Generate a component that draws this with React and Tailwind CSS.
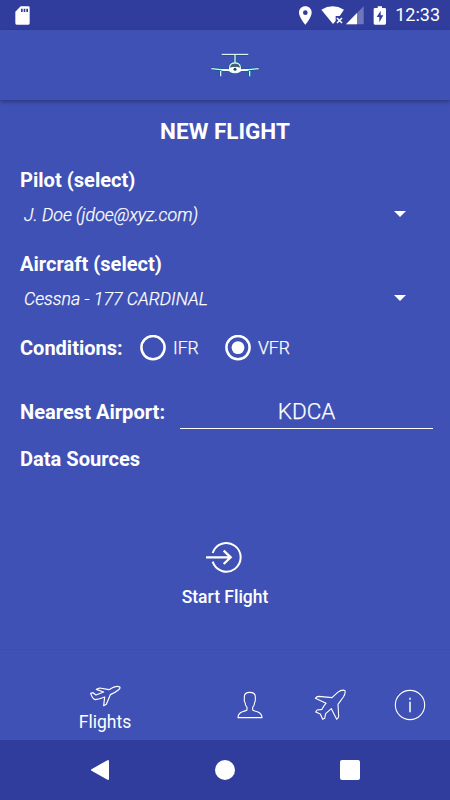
import { useState } from 'react'

const conditions = ['IFR', 'VFR']

function StatusBar() {
  return (
    <div className="flex h-[30px] items-center bg-[#303d9c] pl-[15px] pr-[10px]">
      <svg className="h-[19px] w-[15px]" viewBox="0 0 45 57">
        <path
          fill="white"
          fillRule="evenodd"
          d="M17 1H40Q44 1 44 5V52Q44 56 40 56H5Q1 56 1 52V17ZM18 8V18H23V8ZM26 8V18H31V8ZM34 8V18H39V8Z"
        />
      </svg>
      <div className="ml-auto flex items-center">
        {/* location */}
        <svg className="h-[19px] w-[13px]" viewBox="29 17 39 57">
          <path
            fill="white"
            fillRule="evenodd"
            d="M48 18C37 18 29 26 29 37C29 51 48 73 48 73C48 73 67 51 67 37C67 26 59 18 48 18ZM48 30A7 7 0 1 1 48 44A7 7 0 1 1 48 30Z"
          />
        </svg>
        {/* wifi without connection */}
        <svg className="ml-[9px] h-[19px] w-[23px]" viewBox="94 17 69 57">
          <path fill="white" d="M95 28Q129 8 163 28L150 47H138V62L130 71Z" />
          <path stroke="white" strokeWidth="4.5" d="M142 53L157 68M157 53L142 68" />
        </svg>
        {/* mobile signal */}
        <svg className="ml-[2px] h-[19px] w-[18px]" viewBox="169 17 54 57">
          <path fill="white" fillOpacity=".3" d="M222 18V72H169Z" />
          <path fill="white" d="M202 38V72H169Z" />
        </svg>
        {/* battery */}
        <svg className="ml-[9px] h-[19px] w-[14px]" viewBox="250 17 42 57">
          <path
            fill="white"
            fillRule="evenodd"
            d="M264 18H277V23H285Q289 23 289 27V69Q289 73 285 73H256Q252 73 252 69V27Q252 23 256 23H264ZM273 31L261 50H269V66L281 45H273Z"
          />
        </svg>
        <span className="ml-[8px] text-[18px] leading-[30px]">12:33</span>
      </div>
    </div>
  )
}

function HeaderPlane() {
  const shape = (
    <>
      <path d="M65 28H145M105 28V54M34 71L92 77M176 71L118 77M62 78V94M149 78V94" />
      <path d="M89 66Q91 54 105 54Q119 54 121 66V76Q117 83 105 83Q93 83 89 76Z" />
    </>
  )
  return (
    <svg className="h-[27px] w-[50px]" viewBox="30 18 150 81" fill="none">
      <g stroke="#075d91" strokeWidth="8">{shape}</g>
      <g stroke="#d8f5f1" strokeWidth="4">{shape}</g>
      <path fill="white" d="M60 72L92 73V79L66 77ZM150 72L118 73V79L144 77Z" />
      <path fill="#4a5f70" d="M91 65Q93 56 105 56Q117 56 119 65L112 67H98Z" />
      <path fill="white" d="M89 68L98 66H112L121 68V76Q117 83 105 83Q93 83 89 76Z" />
      <circle cx="105" cy="73" r="4.5" fill="#174477" />
    </svg>
  )
}

function Select({ label, value }) {
  return (
    <div className="mb-4">
      <div className="h-8 text-[20.1px] font-bold leading-8">{label}</div>
      <button type="button" className="flex h-9 w-full items-center justify-between pl-1 pr-[27px]">
        <span className="mt-0.5 text-[17.8px] font-light italic [-webkit-text-stroke:0.25px_white]">{value}</span>
        <svg className="h-[6px] w-[12px]" viewBox="0 0 12 6">
          <path fill="white" d="M0 0H12L6 6Z" />
        </svg>
      </button>
    </div>
  )
}

function BottomTabs() {
  return (
    <nav className="flex h-[91px] border-t border-[#3c4dac]">
      <button type="button" className="flex w-[210px] flex-col items-center pt-[35px]">
        <svg className="ml-[2px] h-[22px] w-[32px]" viewBox="90 45 96 66" fill="none" stroke="white" strokeWidth="3.6" strokeLinejoin="round">
          <path d="M92 70L99 68L108 75L131 66L109 58L119 54L147 59L160 52Q173 47 179 51Q182 54 175 60Q168 66 151 74L139 103L131 107L134 81Q119 88 106 89Q97 86 92 70Z" />
        </svg>
        <span className="mt-[4px] text-[17.5px] leading-[22px]">Flights</span>
      </button>
      <button type="button" className="flex w-20 justify-center pt-10">
        <svg className="h-[30px] w-[26px]" viewBox="53 45 78 90" fill="none" stroke="white" strokeWidth="3.3" strokeLinejoin="round">
          <path d="M83 105V97Q77 90 77 82Q74 80 75 74V65Q75 52 91 52Q108 52 108 65V74Q108 80 106 82Q106 90 100 97V105Q104 108 114 110Q128 115 128 128H56Q56 115 69 110Q79 108 83 105Z" />
        </svg>
      </button>
      <button type="button" className="flex w-20 justify-center pt-[39px]">
        <svg className="h-8 w-8" viewBox="282 42 96 96" fill="none" stroke="white" strokeWidth="3.3" strokeLinejoin="round">
          <path d="M336 68L296 64Q290 64 286 70L318 85Q311 92 306 103L291 105L287 111L301 117L308 133L314 130L317 116L334 101L350 133Q356 129 356 124L354 88L370 66Q377 55 375 47Q367 42 353 52Z" />
        </svg>
      </button>
      <button type="button" className="flex w-20 justify-center pt-[39px]">
        <svg className="h-8 w-8" viewBox="522 42 96 96" fill="none" stroke="white">
          <circle cx="570" cy="90" r="44" strokeWidth="3.3" />
          <path strokeWidth="4.5" d="M570 80V112M570 68V74" />
        </svg>
      </button>
    </nav>
  )
}

function App() {
  const [selected, setSelected] = useState('VFR')
  const [airport, setAirport] = useState('KDCA')

  return (
    <div className="flex h-[800px] w-[450px] flex-col bg-[#3f51b5] font-['Roboto',sans-serif] text-white">
      <StatusBar />
      <header className="flex h-[70px] justify-center pt-[21px] pl-5 shadow-[0_2px_4px_rgba(0,0,0,0.3)]">
        <HeaderPlane />
      </header>

      <main className="flex flex-1 flex-col pl-5 pr-[17px]">
        <h1 className="h-16 pr-[3px] text-center text-[22.5px] font-bold leading-[63px]">NEW FLIGHT</h1>
        <Select label="Pilot (select)" value="J. Doe (jdoe@xyz.com)" />
        <Select label="Aircraft (select)" value="Cessna - 177 CARDINAL" />

        <div className="-mt-4 flex h-16 items-center">
          <span className="w-[120px] text-[20px] font-bold">Conditions:</span>
          {conditions.map((name) => (
            <button
              key={name}
              type="button"
              onClick={() => setSelected(name)}
              className="flex w-[85px] items-center gap-[7px]"
            >
              <svg className="size-[26px]" viewBox="0 0 26 26">
                <circle cx="13" cy="12.6" r="11.6" fill="none" stroke="white" strokeWidth="2.5" />
                {selected === name && <circle cx="13" cy="12.6" r="6.4" fill="white" />}
              </svg>
              <span className="text-[17.6px] font-light [-webkit-text-stroke:0.25px_white]">{name}</span>
            </button>
          ))}
        </div>

        <div className="flex h-16 items-center">
          <label htmlFor="airport" className="w-40 text-[20.1px] font-bold">
            Nearest Airport:
          </label>
          <input
            id="airport"
            value={airport}
            onChange={(e) => setAirport(e.target.value)}
            className="h-[34px] w-[253px] border-b border-white bg-transparent pb-0.5 text-center text-[22.5px] font-light outline-none [-webkit-text-stroke:0.25px_white]"
          />
        </div>
        <div className="h-[30px] text-[20.1px] font-bold leading-[30px]">Data Sources</div>

        <button type="button" className="mt-[67px] flex flex-col items-center pr-[3px]">
          <svg className="mr-[3px] h-[33px] w-[38px]" viewBox="105 33 114 99" fill="none" stroke="white" strokeWidth="6">
            <path d="M128 69A43 43 0 1 1 128 95" />
            <path strokeWidth="7" d="M108 82H182M161 62L182 82L161 102" />
          </svg>
          <span className="mt-[12px] text-[17.5px] font-medium leading-[22px]">Start Flight</span>
        </button>
      </main>

      <BottomTabs />

      <div className="flex h-[60px] items-center justify-between bg-[#303d9c] pl-[91px] pr-[90px]">
        <svg className="h-[22px] w-[19px]" viewBox="0 0 19 22">
          <path fill="white" stroke="white" strokeWidth="2" strokeLinejoin="round" d="M1 11L17 2V20Z" />
        </svg>
        <span className="size-5 rounded-full bg-white" />
        <span className="size-5 rounded-xs bg-white" />
      </div>
    </div>
  )
}

export default App
